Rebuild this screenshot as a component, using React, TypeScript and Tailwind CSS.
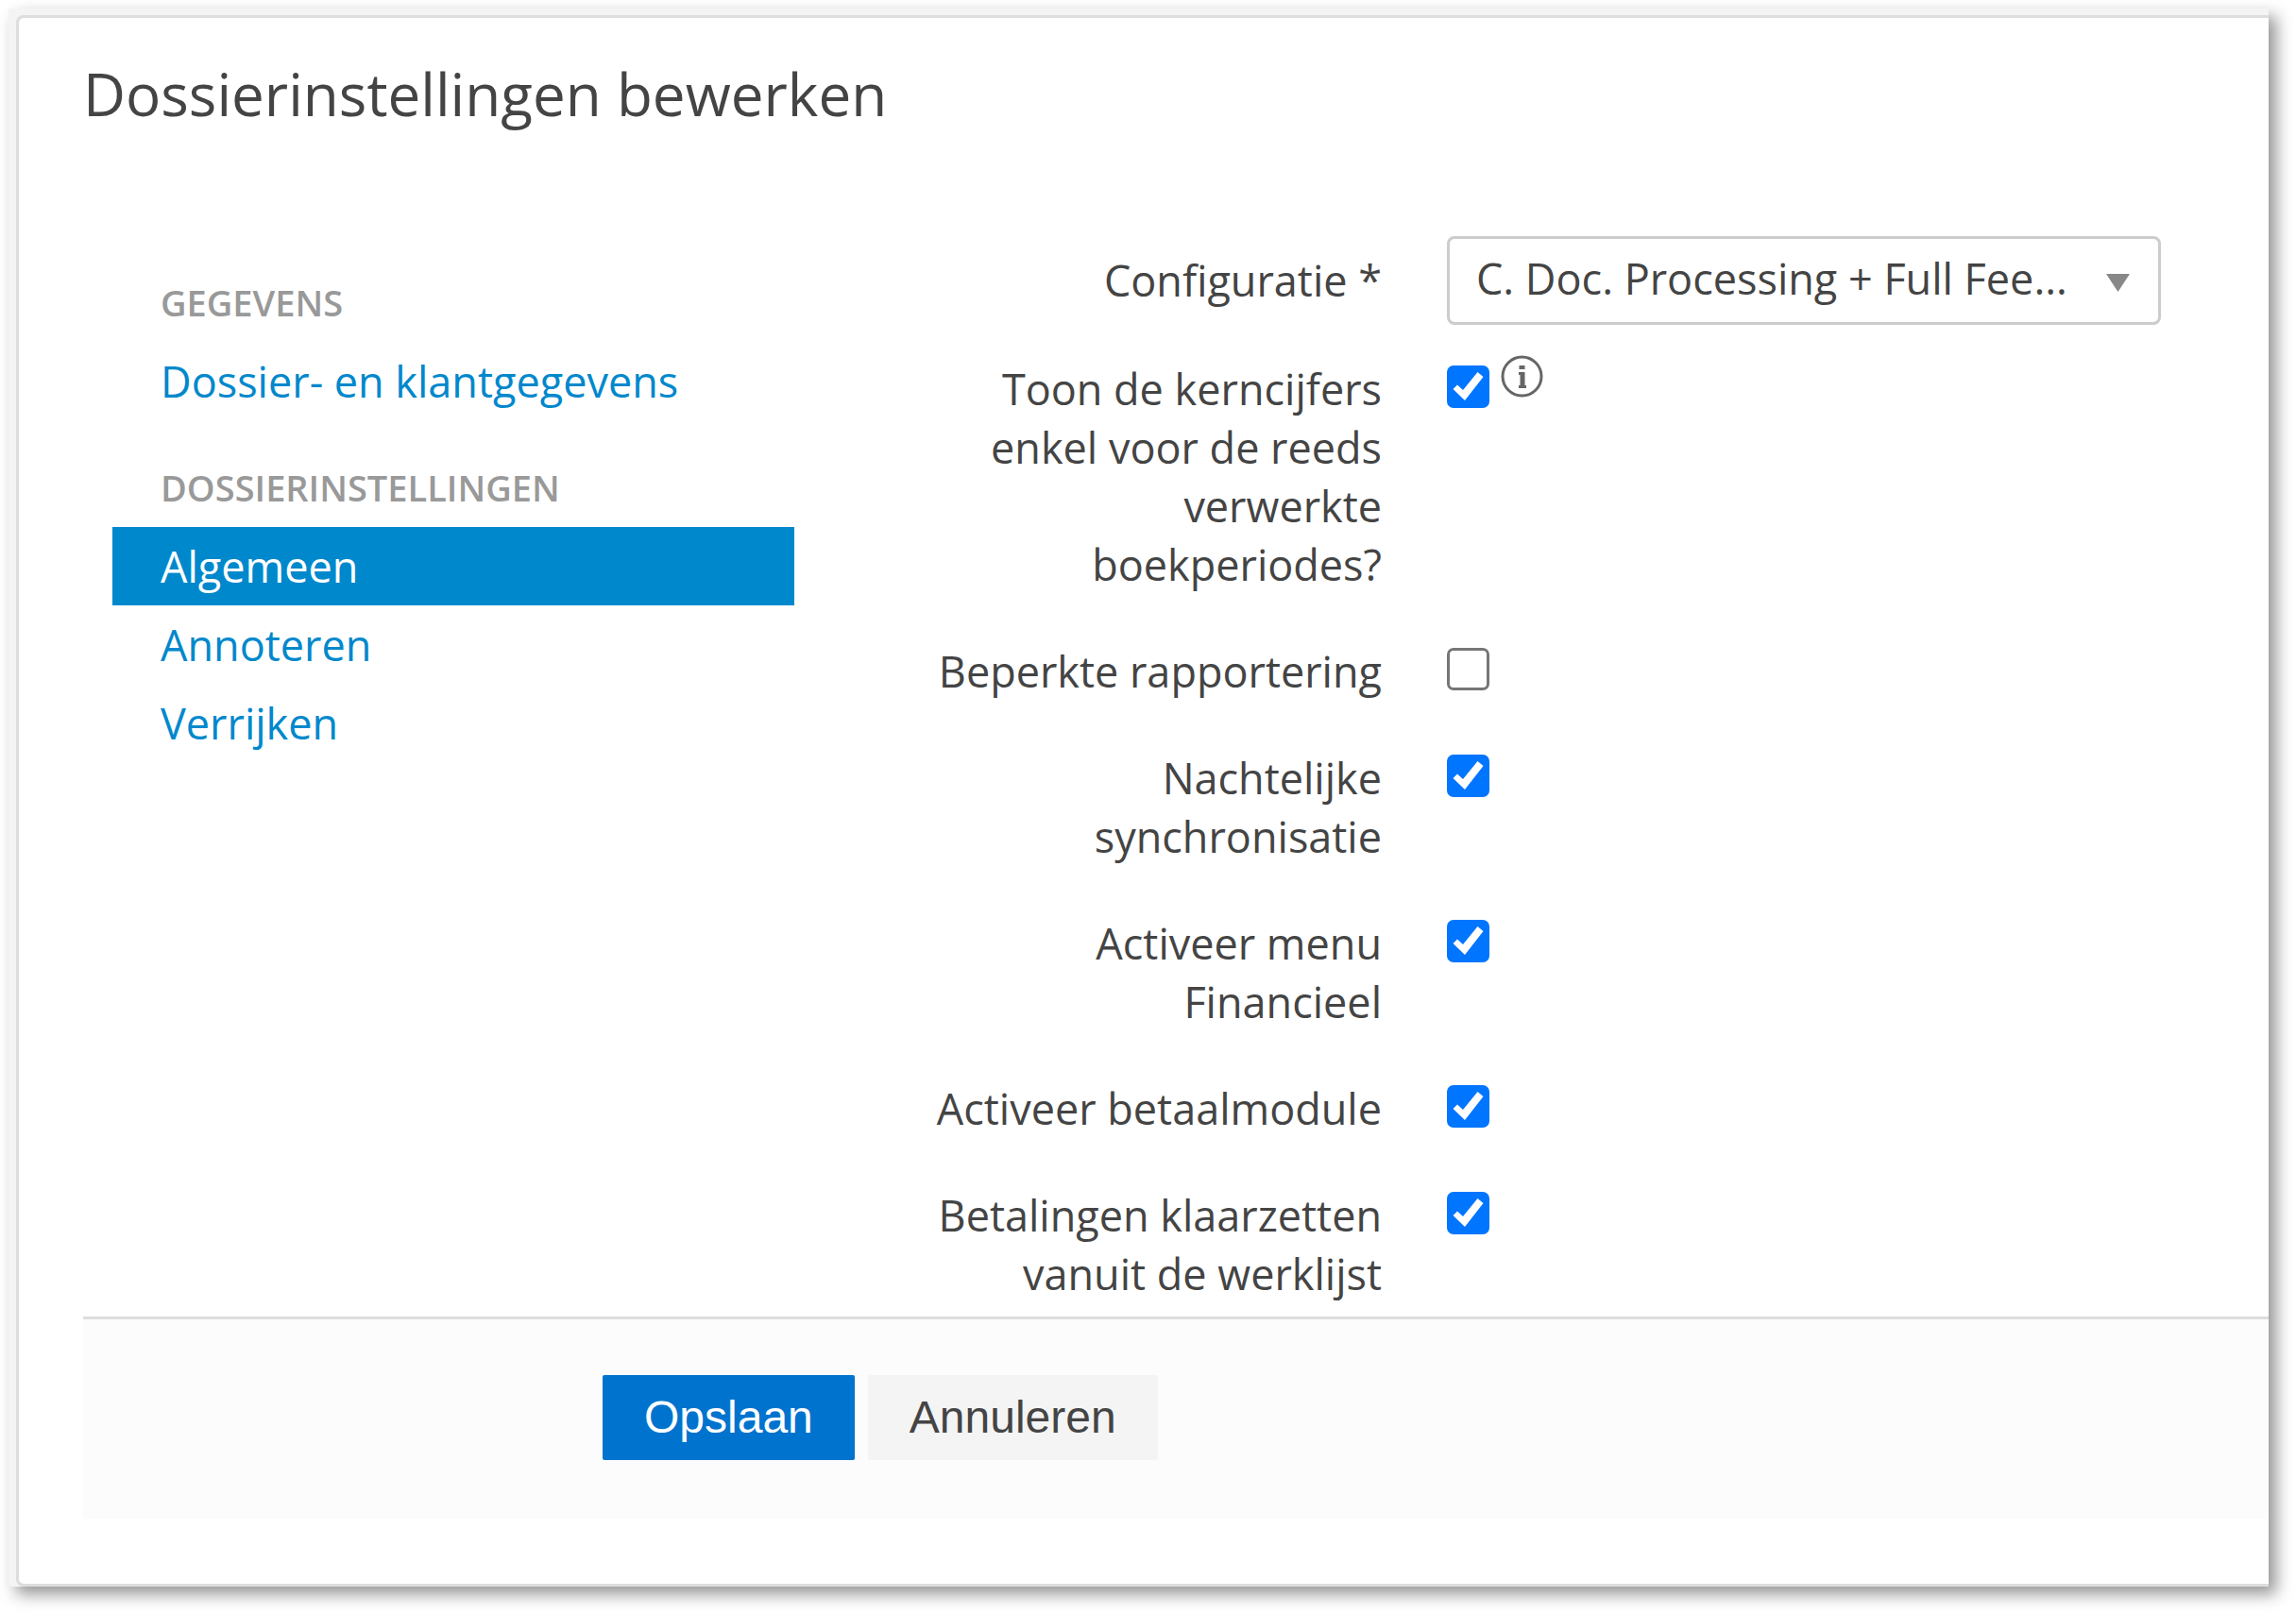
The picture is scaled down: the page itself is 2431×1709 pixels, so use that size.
import { useState } from 'react';

type Setting = { id: string; label: string; checked: boolean; info?: boolean };

const SETTINGS: Setting[] = [
  { id: 'kerncijfers', label: 'Toon de kerncijfers enkel voor de reeds verwerkte boekperiodes?', checked: true, info: true },
  { id: 'rapportering', label: 'Beperkte rapportering', checked: false },
  { id: 'synchronisatie', label: 'Nachtelijke synchronisatie', checked: true },
  { id: 'financieel', label: 'Activeer menu Financieel', checked: true },
  { id: 'betaalmodule', label: 'Activeer betaalmodule', checked: true },
  { id: 'betalingen', label: 'Betalingen klaarzetten vanuit de werklijst', checked: true },
];

const MENU = [
  { title: 'GEGEVENS', items: ['Dossier- en klantgegevens'] },
  { title: 'DOSSIERINSTELLINGEN', items: ['Algemeen', 'Annoteren', 'Verrijken'] },
];

function InfoIcon() {
  return (
    <svg className="w-[45px] h-[45px]" viewBox="0 0 45 45" fill="none" role="img" aria-label="Info">
      <circle cx="22.5" cy="22.5" r="20.5" stroke="#666" strokeWidth="3" />
      <path d="M19 18h6.500v14H27v3h-8v-3h1.500V21H19z" fill="#666" />
      <rect x="19.5" y="11" width="6" height="4" fill="#666" />
    </svg>
  );
}

function Checkbox({ id, defaultChecked }: { id: string; defaultChecked: boolean }) {
  return (
    <span className="relative block w-[45px] h-[45px]">
      <input
        id={id}
        type="checkbox"
        defaultChecked={defaultChecked}
        className="peer block w-full h-full appearance-none rounded-[7px] border-3 border-[#767676] bg-white checked:border-[#0075ff] checked:bg-[#0075ff]"
      />
      <svg className="absolute inset-0 hidden pointer-events-none peer-checked:block" viewBox="0 0 45 45">
        <path d="M6.500 25L11 20.500L17 26L32.500 7L38.500 12L19 37z" fill="#fff" />
      </svg>
    </span>
  );
}

function Sidebar({ active, onSelect }: { active: string; onSelect: (item: string) => void }) {
  return (
    <nav className="w-[722px] shrink-0 pt-[29px] space-y-[30px]">
      {MENU.map((group) => (
        <div key={group.title}>
          <h2 className="px-[51px] text-[38px] leading-[83px] font-semibold text-[#999]">{group.title}</h2>
          <ul>
            {group.items.map((item) => (
              <li key={item}>
                <a
                  href="#"
                  onClick={(e) => { e.preventDefault(); onSelect(item); }}
                  className={`block px-[51px] leading-[83px] ${item === active ? 'bg-[#0088cc] text-white' : 'text-[#0088cc]'}`}
                >
                  {item}
                </a>
              </li>
            ))}
          </ul>
        </div>
      ))}
    </nav>
  );
}

export default function App() {
  const [active, setActive] = useState('Algemeen');

  return (
    <div className="bg-white pt-[9px] pl-[9px] pr-[29px] pb-[29px] font-['Open_Sans',sans-serif] text-[45px] leading-[62px] text-[#444]">
      <div className="bg-[#f4f4f4] pt-[7px] pl-[8px] shadow-[8px_8px_16px_rgba(0,0,0,0.42)]">
        <main className="bg-white border-3 border-r-0 border-[#ddd] rounded-l-lg pl-[68px] pb-[69px]">
          <h1 className="pt-[30px] text-[62px] leading-[100px]">Dossierinstellingen bewerken</h1>

          <form onSubmit={(e) => e.preventDefault()}>
            <div className="flex justify-between pt-[101px] pl-[31px] pr-[114px]">
              <Sidebar active={active} onSelect={setActive} />

              <div className="flex w-[1305px] flex-col gap-[21px]">
                <div className="flex items-start gap-[69px]">
                  <label htmlFor="configuratie" className="w-[480px] shrink-0 pt-4 text-right">Configuratie *</label>
                  <div className="relative flex-1">
                    <select
                      id="configuratie"
                      className="block w-full h-[94px] appearance-none rounded-lg border-3 border-[#ccc] bg-white pl-[28px] pr-[90px] pb-[4px] text-[#444]"
                    >
                      <option>C. Doc. Processing + Full Fee...</option>
                    </select>
                    <svg className="absolute right-[33px] top-[40px] w-[25px] h-[19px] pointer-events-none" viewBox="0 0 25 19">
                      <path d="M0 0h25L12.500 19z" fill="#888" />
                    </svg>
                  </div>
                </div>

                {SETTINGS.map((s) => (
                  <div key={s.id} className="flex items-start gap-[69px] pb-[14px]">
                    <label htmlFor={s.id} className="w-[480px] shrink-0 pt-4 text-right">{s.label}</label>
                    <div className="flex items-start gap-3 pt-[11px]">
                      <div className="pt-[11px]"><Checkbox id={s.id} defaultChecked={s.checked} /></div>
                      {s.info && <InfoIcon />}
                    </div>
                  </div>
                ))}
              </div>
            </div>

            <div className="flex gap-[14px] border-t-3 border-[#ddd] bg-[#fcfcfc] pl-[550px] pt-[59px] pb-[62px] font-['Liberation_Sans',sans-serif] text-[48px]">
              <button type="submit" className="h-[90px] rounded-xs bg-[#0073cf] px-[44px] text-white">Opslaan</button>
              <button type="button" className="h-[90px] rounded-xs bg-[#f4f4f4] px-[44px]">Annuleren</button>
            </div>
          </form>
        </main>
      </div>
    </div>
  );
}
